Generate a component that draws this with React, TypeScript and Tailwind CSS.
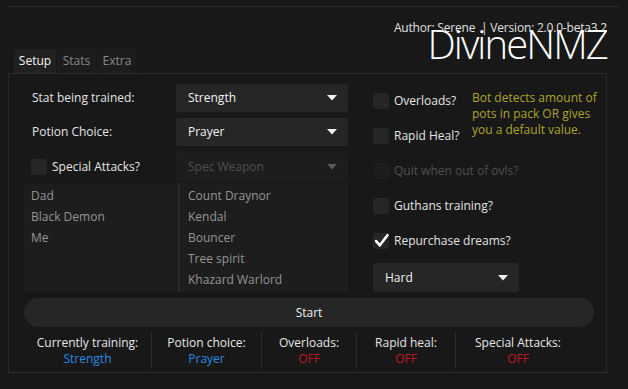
import React from 'react';

const font = { fontFamily: '"Open Sans", "Noto Sans", sans-serif' };

function Arrow({ dim }: { dim?: boolean }) {
  return (
    <svg width="10" height="6" viewBox="0 0 10 6" className="shrink-0">
      <path d="M0 0 L10 0 L5 5.5 Z" fill={dim ? '#5a5a5a' : '#f0f0f0'} />
    </svg>
  );
}

function Select({ value, dim, className = '' }: { value: string; dim?: boolean; className?: string }) {
  return (
    <div
      className={`flex h-[28px] items-center justify-between rounded-[3px] pl-[12px] pr-[11px] ${
        dim ? 'bg-[#1d1d1d] text-[#4f4f4f]' : 'bg-[#262626] text-[#f2f2f2]'
      } ${className}`}
    >
      <span>{value}</span>
      <Arrow dim={dim} />
    </div>
  );
}

function Check({ label, checked, dim }: { label: string; checked?: boolean; dim?: boolean }) {
  return (
    <div className="flex h-[35px] items-center gap-[5px]">
      <div className={`flex h-[16px] w-[16px] items-center justify-center rounded-[3px] ${dim ? 'bg-[#1d1d1d]' : 'bg-[#262626]'}`}>
        {checked && (
          <svg width="15" height="15" viewBox="0 0 14 14">
            <path d="M2 7.5 L5.5 11.5 L12.5 2" stroke="#fff" strokeWidth="2.4" fill="none" strokeLinecap="round" strokeLinejoin="round" />
          </svg>
        )}
      </div>
      <span className={dim ? 'text-[#4f4f4f]' : 'text-[#e4e4e4]'}>{label}</span>
    </div>
  );
}

function Stat({ label, value, on, w, last }: { label: string; value: string; on?: boolean; w: string; last?: boolean }) {
  return (
    <div className={`flex flex-col items-center justify-center ${w} ${last ? '' : 'border-r border-[#2c2c2c]'}`}>
      <span className="text-[#e6e6e6] leading-[16px]">{label}</span>
      <span className={`leading-[16px] ${on ? 'text-[#2a8be0]' : 'text-[#c0191b]'}`}>{value}</span>
    </div>
  );
}

export default function App() {
  return (
    <div className="w-[628px] h-[389px] bg-[#181818] text-[12px] overflow-hidden" style={font}>
      <div className="ml-[8px] mt-[6px] h-px w-[611px] bg-[#2a2a2a]" />

      <div className="flex h-[66px] items-end justify-between pl-[14px] pr-[21px]">
        <div className="flex gap-px">
          <div className="flex h-[24px] w-[42px] items-center justify-center rounded-t-[3px] bg-[#212121] text-[#f5f5f5]">Setup</div>
          <div className="flex h-[24px] w-[39px] items-center justify-center rounded-t-[3px] bg-[#1c1c1c] text-[#8a8a8a]">Stats</div>
          <div className="flex h-[24px] w-[40px] items-center justify-center rounded-t-[3px] bg-[#1c1c1c] text-[#8a8a8a]">Extra</div>
        </div>
        <div className="flex flex-col items-end self-start">
          <div className="mt-[13px] leading-[16px] text-[#e0e0e0] tracking-[-0.2px]">Author: Serene&nbsp;&nbsp;|&nbsp;Version: 2.0.0-beta3.2</div>
          <div className="-mt-[12px] text-[40px] font-light leading-[40px] tracking-[-1.9px] text-white">DivineNMZ</div>
        </div>
      </div>

      <div className="ml-[8px] flex h-[300px] w-[599px] flex-col border border-[#2b2b2b] pl-[15px] pr-[13px]">
        <div className="flex pt-[10px]">
          {/* left column */}
          <div className="flex w-[324px] flex-col">
            <div className="flex items-center">
              <span className="w-[152px] pl-[8px] text-[#e4e4e4]">Stat being trained:</span>
              <Select value="Strength" className="w-[172px]" />
            </div>
            <div className="mt-[6px] flex items-center">
              <span className="w-[152px] pl-[8px] text-[#e4e4e4]">Potion Choice:</span>
              <Select value="Prayer" className="w-[172px]" />
            </div>
            <div className="mt-[6px] flex items-center">
              <div className="flex w-[152px] items-center gap-[5px] pl-[7px]">
                <div className="h-[16px] w-[16px] rounded-[3px] bg-[#262626]" />
                <span className="text-[#e4e4e4]">Special Attacks?</span>
              </div>
              <Select value="Spec Weapon" dim className="w-[172px] h-[29px]" />
            </div>
            <div className="mt-[2px] flex h-[109px] bg-[#1d1d1d]">
              <div className="flex w-[154px] flex-col pl-[7px] pt-[2px] text-[#959595]">
                <span className="leading-[21px]">Dad</span>
                <span className="leading-[21px]">Black Demon</span>
                <span className="leading-[21px]">Me</span>
              </div>
              <div className="w-[2px] bg-[#2a2a2a]" />
              <div className="flex flex-col pl-[8px] pt-[2px] text-[#959595]">
                <span className="leading-[21px]">Count Draynor</span>
                <span className="leading-[21px]">Kendal</span>
                <span className="leading-[21px]">Bouncer</span>
                <span className="leading-[21px]">Tree spirit</span>
                <span className="leading-[21px]">Khazard Warlord</span>
              </div>
            </div>
          </div>

          {/* right column */}
          <div className="ml-[25px] flex flex-col">
            <div className="mt-[-1px] flex">
              <div className="flex w-[99px] flex-col">
                <Check label="Overloads?" />
                <Check label="Rapid Heal?" />
              </div>
              <div className="mt-[7px] w-[138px] leading-[16px] text-[#aea32c]">
                Bot detects amount of pots in pack OR gives you a default value.
              </div>
            </div>
            <Check label="Quit when out of ovls?" dim />
            <Check label="Guthans training?" />
            <Check label="Repurchase dreams?" checked />
            <Select value="Hard" className="mt-[5px] w-[146px] h-[29px]" />
          </div>
        </div>

        <div className="mt-[6px] flex h-[29px] w-[570px] items-center justify-center rounded-full bg-[#262626] text-[#f0f0f0]">
          Start
        </div>

        <div className="mt-[5px] flex h-[37px]">
          <Stat label="Currently training:" value="Strength" on w="w-[128px]" />
          <Stat label="Potion choice:" value="Prayer" on w="w-[110px]" />
          <Stat label="Overloads:" value="OFF" w="w-[95px]" />
          <Stat label="Rapid heal:" value="OFF" w="w-[99px]" />
          <Stat label="Special Attacks:" value="OFF" w="w-[124px]" last />
        </div>
      </div>
    </div>
  );
}
